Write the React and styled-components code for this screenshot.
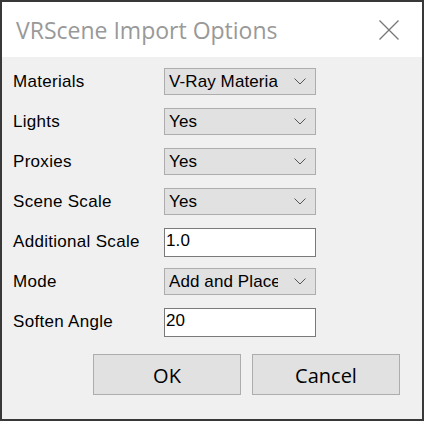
import React from "react";
import styled, { createGlobalStyle } from "styled-components";

const Global = createGlobalStyle`
  html, body { margin: 0; padding: 0; background: #f0f0f0; }
  * { box-sizing: border-box; }
`;

const Window = styled.div`
  width: 424px;
  height: 421px;
  border: 2px solid #383838;
  background: #f0f0f0;
  display: flex;
  flex-direction: column;
  overflow: hidden;
`;

const TitleBar = styled.div`
  height: 55px;
  background: #ffffff;
  display: flex;
  align-items: center;
  justify-content: space-between;
  padding: 0 23px 0 14px;
  flex-shrink: 0;
`;

const Title = styled.div`
  font-family: "Open Sans", "Noto Sans", sans-serif;
  font-size: 23px;
  color: #999999;
  padding-top: 1px;
`;

const Close = styled.svg`
  width: 20px;
  height: 20px;
`;

const Body = styled.div`
  padding: 11px 22px 0 11px;
  display: flex;
  flex-direction: column;
`;

const Form = styled.div`
  display: grid;
  grid-template-columns: 151px 152px;
  grid-auto-rows: 40px;
  align-items: start;
`;

const Label = styled.div`
  font-family: "Liberation Sans", Arial, sans-serif;
  font-size: 17px;
  letter-spacing: 0.3px;
  line-height: 28px;
  color: #000;
  white-space: nowrap;
`;

const SelectBox = styled.div`
  height: 27px;
  background: #e1e1e1;
  border: 1px solid #adadad;
  display: flex;
  align-items: center;
  padding-left: 4px;
  font-family: "Liberation Sans", Arial, sans-serif;
  font-size: 17px;
  letter-spacing: 0.1px;
  color: #000;
`;

const SelectValue = styled.span`
  flex: 1;
  overflow: hidden;
  white-space: nowrap;
  margin-right: 16px;
  line-height: 26px;
`;

const Chevron = styled.svg`
  width: 12px;
  height: 7px;
  margin-right: 9px;
  flex-shrink: 0;
`;

const TextInput = styled.div`
  height: 29px;
  background: #ffffff;
  border: 1px solid #7a7a7a;
  padding: 2px 1px;
  font-family: "Liberation Sans", Arial, sans-serif;
  font-size: 17px;
  letter-spacing: 0.1px;
  line-height: 20px;
  color: #000;
`;

const ButtonRow = styled.div`
  display: flex;
  justify-content: flex-end;
  gap: 11px;
  margin-top: 6px;
`;

const Button = styled.div`
  width: 148px;
  height: 41px;
  background: #e1e1e1;
  border: 1px solid #adadad;
  display: flex;
  align-items: center;
  justify-content: center;
  font-family: "Open Sans", "Noto Sans", sans-serif;
  font-size: 20px;
  color: #000;
  padding-top: 1px;
`;

const Select = ({ value }) => (
  <SelectBox>
    <SelectValue>{value}</SelectValue>
    <Chevron viewBox="0 0 12 7">
      <path d="M0.5 0.5 L6 6 L11.5 0.5" fill="none" stroke="#555" strokeWidth="1" />
    </Chevron>
  </SelectBox>
);

const rows = [
  { label: "Materials", type: "select", value: "V-Ray Material" },
  { label: "Lights", type: "select", value: "Yes" },
  { label: "Proxies", type: "select", value: "Yes" },
  { label: "Scene Scale", type: "select", value: "Yes" },
  { label: "Additional Scale", type: "input", value: "1.0" },
  { label: "Mode", type: "select", value: "Add and Place" },
  { label: "Soften Angle", type: "input", value: "20" },
];

export default function App() {
  return (
    <>
      <Global />
      <Window>
        <TitleBar>
          <Title>VRScene Import Options</Title>
          <Close viewBox="0 0 20 20">
            <path d="M0.5 0.5 L19.5 19.5 M19.5 0.5 L0.5 19.5" stroke="#777" strokeWidth="1.3" fill="none" />
          </Close>
        </TitleBar>
        <Body>
          <Form>
            {rows.map((r) => (
              <React.Fragment key={r.label}>
                <Label>{r.label}</Label>
                {r.type === "select" ? (
                  <Select value={r.value} />
                ) : (
                  <TextInput>{r.value}</TextInput>
                )}
              </React.Fragment>
            ))}
          </Form>
          <ButtonRow>
            <Button>OK</Button>
            <Button>Cancel</Button>
          </ButtonRow>
        </Body>
      </Window>
    </>
  );
}
